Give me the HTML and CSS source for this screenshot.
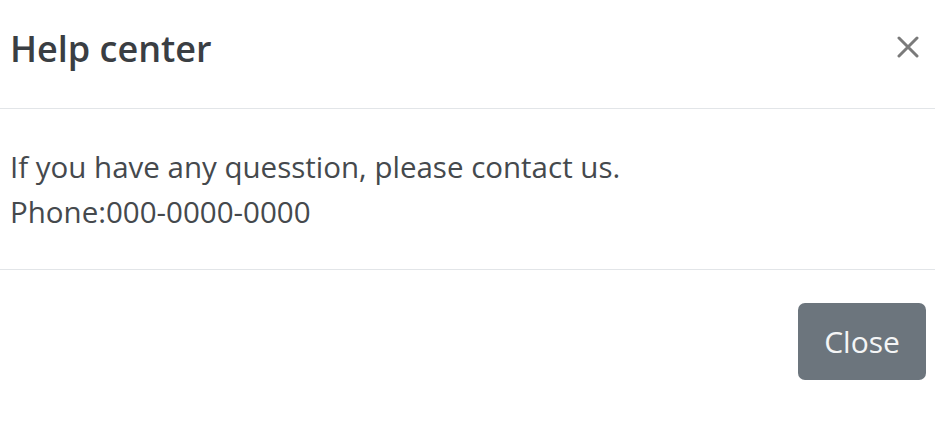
FILE: index.html
```html
<!DOCTYPE html>
<html lang="en">
<head>
<meta charset="utf-8">
<title>Help center</title>
<link rel="stylesheet" href="styles.css">
</head>
<body>
<div class="modal">
  <div class="modal-header">
    <h5 class="modal-title">Help center</h5>
    <button class="close" type="button" aria-label="Close">
      <svg width="22" height="22" viewBox="0 0 22 22"><path d="M2 2 L20 20 M20 2 L2 20" stroke="#7a7a7a" stroke-width="3" stroke-linecap="round"/></svg>
    </button>
  </div>
  <div class="modal-body">
    <p>If you have any quesstion, please contact us.</p>
    <p>Phone:000-0000-0000</p>
  </div>
  <div class="modal-footer">
    <button class="btn" type="button">Close</button>
  </div>
</div>
</body>
</html>
```
FILE: styles.css
```css
html, body {
  margin: 0;
  padding: 0;
  background: #ffffff;
}
.modal {
  width: 935px;
  font-family: "Open Sans", "Noto Sans", sans-serif;
  color: #3a3f44;
}
.modal-header {
  display: flex;
  justify-content: space-between;
  align-items: center;
  height: 109px;
  padding: 0 16px 0 10px;
  box-sizing: border-box;
  border-bottom: 1px solid #e2e5e8;
}
.modal-title {
  margin: 0;
  font-size: 36px;
  font-weight: 600;
  line-height: 44px;
  color: #3a3e43;
  padding-bottom: 10px;
}
.close {
  background: none;
  border: 0;
  padding: 0;
  margin-bottom: 14px;
  display: flex;
}
.modal-body {
  height: 161px;
  box-sizing: border-box;
  padding: 35px 10px 0;
  border-bottom: 1px solid #e2e5e8;
}
.modal-body p {
  margin: 0;
  font-size: 29.5px;
  line-height: 45px;
  color: #45494d;
}
.modal-footer {
  display: flex;
  justify-content: flex-end;
  padding: 33px 9px 0 0;
}
.btn {
  width: 128px;
  height: 77px;
  background: #6c757d;
  border: 0;
  border-radius: 7px;
  color: #f4f5f6;
  font-family: "Open Sans", "Noto Sans", sans-serif;
  font-size: 30px;
  padding: 0;
}
```
